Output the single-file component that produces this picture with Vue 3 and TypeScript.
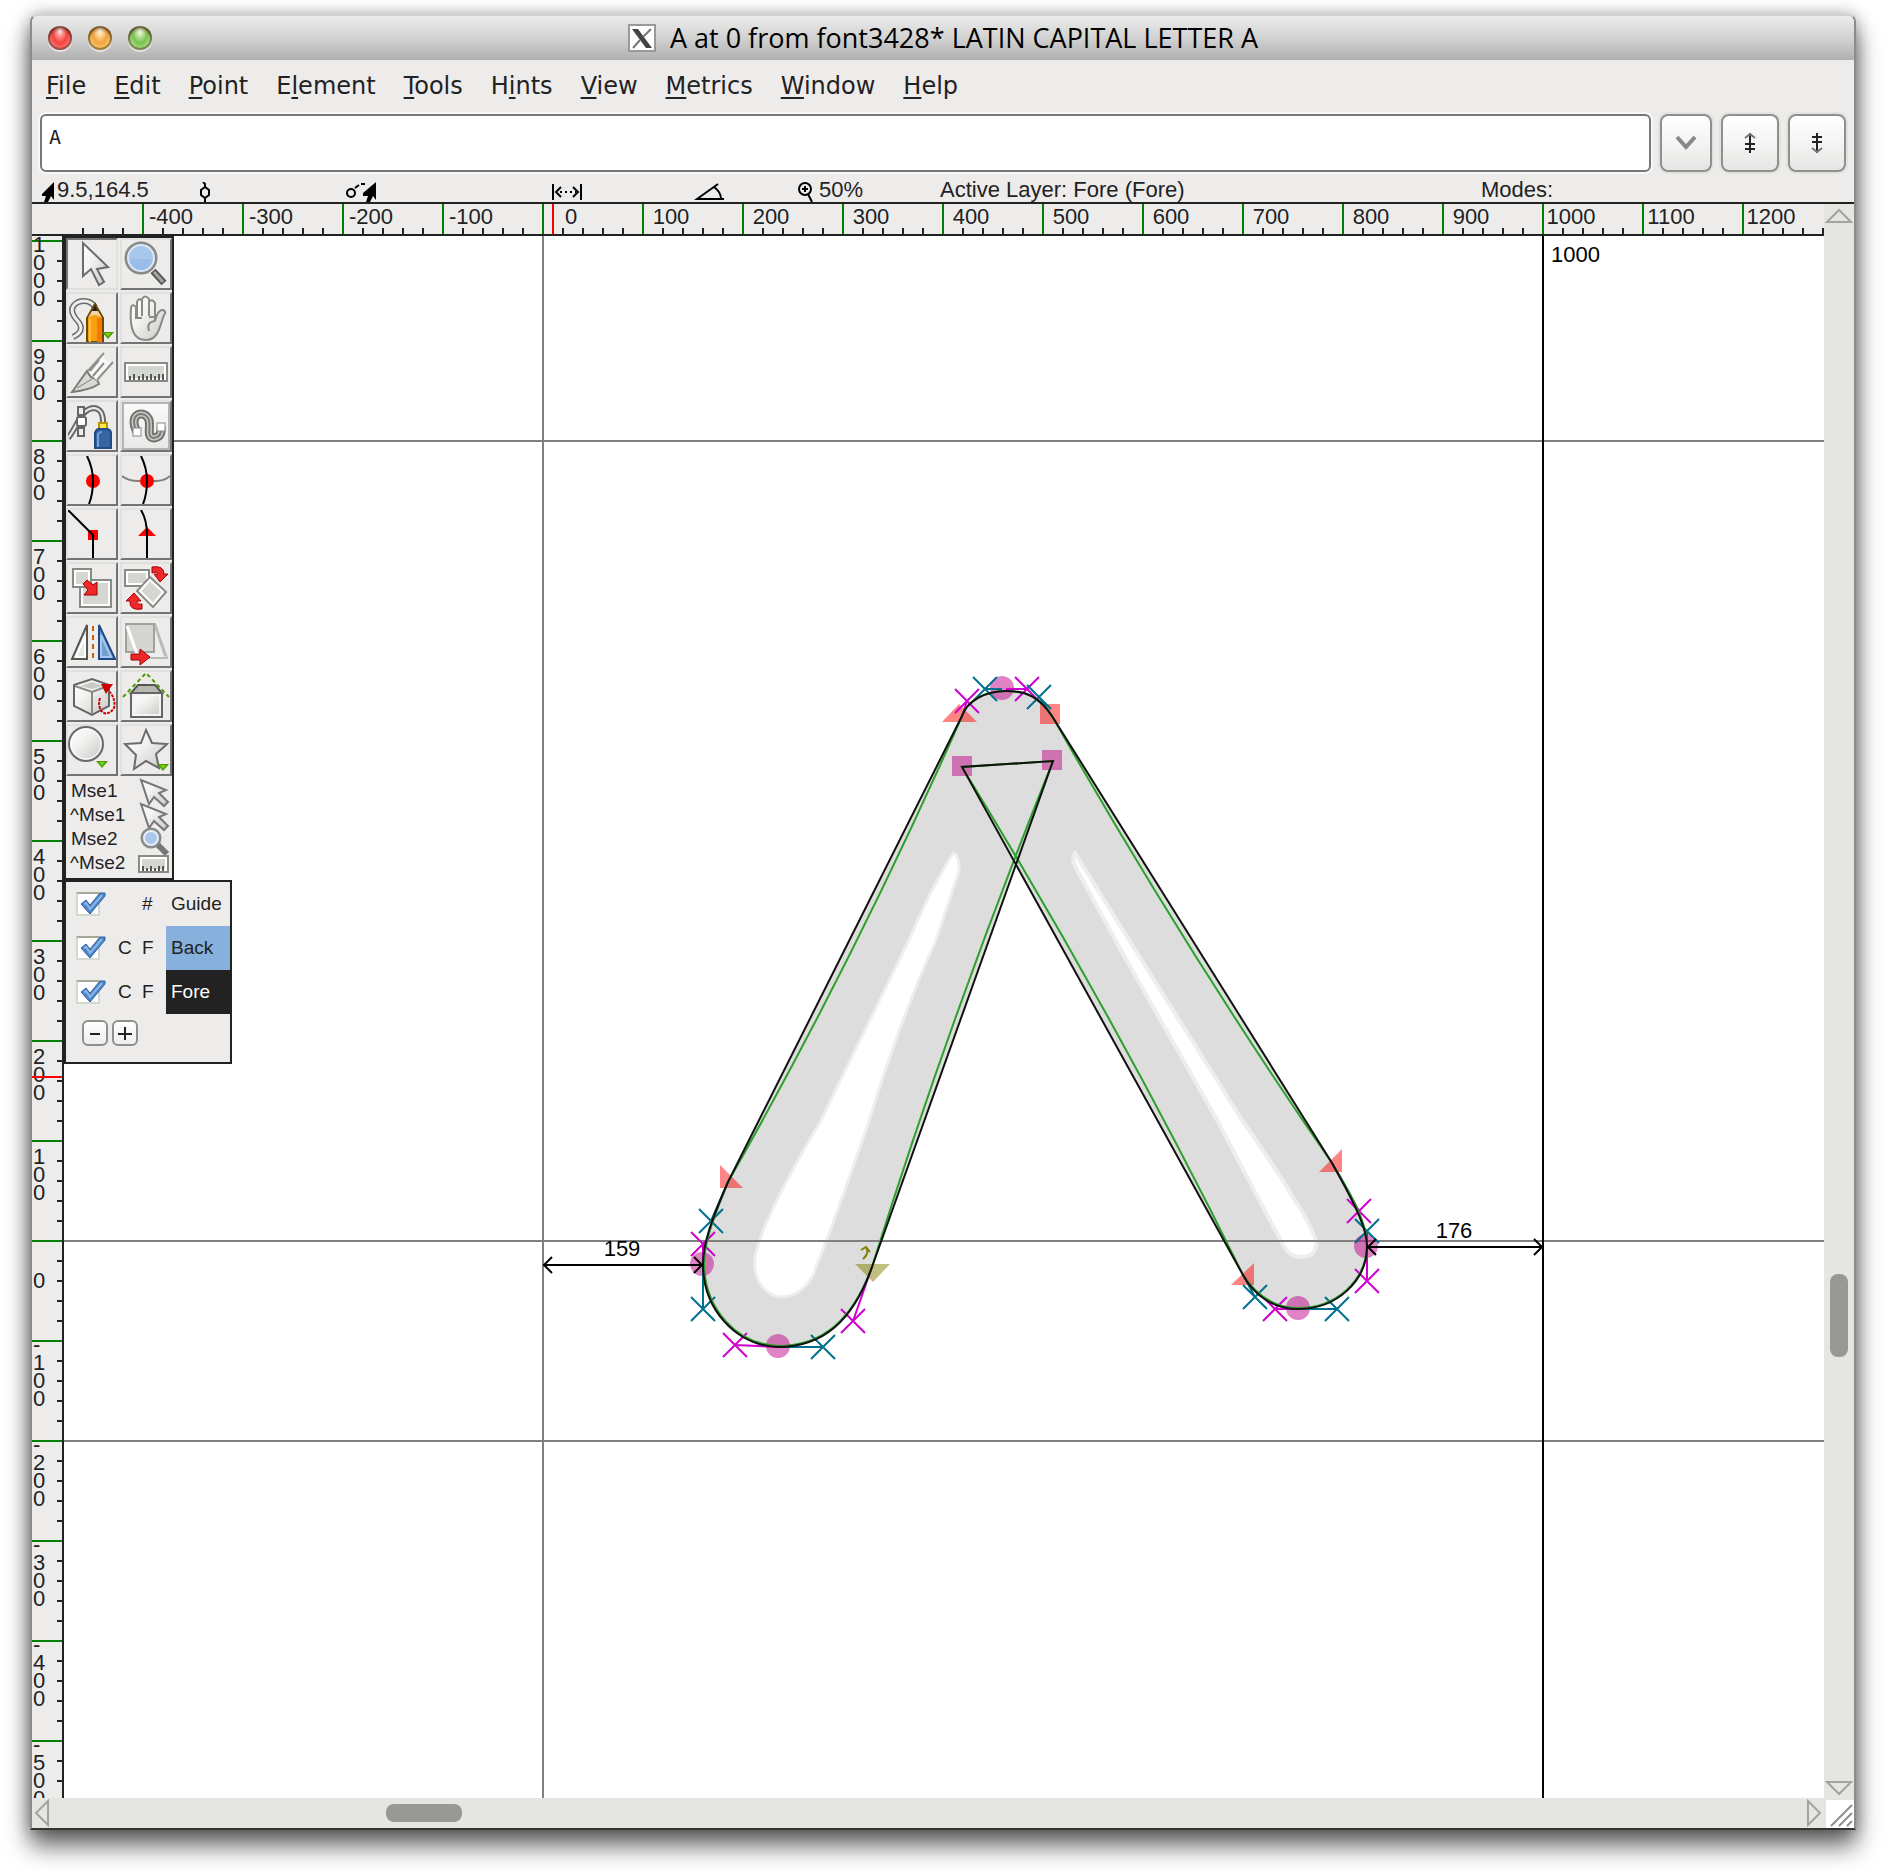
<script setup lang="ts">
import { computed, onBeforeUnmount, onMounted, ref } from 'vue'

interface Menu { pre: string; key: string; post: string }
const menus: Menu[] = [
  { pre: '', key: 'F', post: 'ile' },
  { pre: '', key: 'E', post: 'dit' },
  { pre: '', key: 'P', post: 'oint' },
  { pre: 'E', key: 'l', post: 'ement' },
  { pre: '', key: 'T', post: 'ools' },
  { pre: 'H', key: 'i', post: 'nts' },
  { pre: '', key: 'V', post: 'iew' },
  { pre: '', key: 'M', post: 'etrics' },
  { pre: '', key: 'W', post: 'indow' },
  { pre: '', key: 'H', post: 'elp' },
]

const glyphText = ref('A')

/* Rulers: one font unit per pixel. Zero sits at ZERO_X / ZERO_Y in ruler space. */
const ZERO_X = 511
const ZERO_Y = 1005
const viewWidth = ref(window.innerWidth)
const viewHeight = ref(window.innerHeight)
const measure = () => {
  viewWidth.value = window.innerWidth
  viewHeight.value = window.innerHeight
}
onMounted(() => window.addEventListener('resize', measure))
onBeforeUnmount(() => window.removeEventListener('resize', measure))

const range = (from: number, to: number, step: number): number[] => {
  const out: number[] = []
  for (let v = from; v <= to; v += step) out.push(v)
  return out
}
const right = computed(() => Math.max(viewWidth.value, 1640) - 94 - ZERO_X)
const bottom = computed(() => ZERO_Y - (Math.max(viewHeight.value, 1300) - 314))
const hMajor = computed(() => range(-400, right.value, 100).map(v => ({ v, x: ZERO_X + v })))
const hMinor = computed(() => range(-460, right.value, 20).filter(v => v % 100 !== 0).map(v => ZERO_X + v))
const vMajor = computed(() =>
  range(Math.ceil(bottom.value / 100) * 100, 1000, 100).map(v => ({ v, y: ZERO_Y - v, chars: String(v).split('') })),
)
const vMinor = computed(() =>
  range(Math.ceil(bottom.value / 20) * 20, 980, 20).filter(v => v % 100 !== 0).map(v => ZERO_Y - v),
)

/* Control points of the outline */
const nextHandles = [
  [962, 716, 967, 701], [1006, 689, 1027, 689], [1332, 1163, 1359, 1211],
  [1367, 1246, 1367, 1281], [1298, 1309, 1275, 1309], [872, 1267, 853, 1321],
  [778, 1347, 735, 1345], [703, 1264, 703, 1244],
]
const prevHandles = [
  [1002, 689, 985, 689], [1052, 716, 1039, 697], [1367, 1246, 1367, 1231],
  [1298, 1309, 1337, 1309], [1243, 1275, 1255, 1297], [778, 1347, 823, 1347],
  [703, 1264, 703, 1309], [728, 1182, 711, 1221],
]
const curvePoints = [[1002, 688], [1366, 1246], [1298, 1308], [778, 1346], [702, 1264]]

const black =
  'M962 716 C967 701 985 691 1006 691 C1027 691 1039 697 1052 716 L1332 1163 C1359 1211 1367 1231 1367 1246 ' +
  'C1367 1281 1337 1309 1298 1309 C1275 1309 1255 1297 1243 1275 L962 767 L1053 761 L872 1267 ' +
  'C853 1321 823 1347 778 1347 C735 1345 703 1309 703 1264 C703 1244 711 1221 728 1182 Z'
const green =
  'M962 716 C967 701 985 691 1006 691 C1027 691 1039 697 1052 716 Q1188 955 1332 1163 C1362 1211 1367 1231 1367 1246 ' +
  'C1366 1281 1336 1308 1298 1308 C1276 1308 1257 1296 1243 1275 Q1119 1023 962 767 L1053 761 Q949 1020 872 1267 ' +
  'C852 1321 822 1346 778 1346 C736 1344 705 1309 704 1264 C704 1244 712 1221 728 1182 Q857 955 962 716 Z'

interface Tool { name: string; art: string; pressed?: boolean; raised?: boolean }
const drop = (x: number, y: number) =>
  `<path d="M${x} ${y}h12l-6 7z" fill="#4e9a06"/><path d="M${x + 3} ${y + 1}h6l-3 4z" fill="#73d216"/>`
const tools: Tool[] = [
  { name: 'Pointer', pressed: true, art: '<path d="M15 3V36L23 29L31 45L36 42L29 29L40 27Z" fill="url(#metal)" stroke="#6b6b6b" stroke-width="2"/>' },
  { name: 'Magnify', art: '<path d="M31 31L42 43" stroke="#555753" stroke-width="7"/><path d="M32 32L41 42" stroke="#a5a59f" stroke-width="3"/><circle cx="19" cy="18" r="15" fill="#a9c7ea" stroke="#888a85" stroke-width="3"/><circle cx="19" cy="18" r="13" fill="none" stroke="#d8e6f6" stroke-width="2"/><path d="M8 19h22a11 11 0 0 1-22 0z" fill="#98bde8"/>' },
  { name: 'Freehand', art: '<path d="M5 43C18 37 12 29 8 25C-2 12 10 7 16 7Q23 7 27 13" fill="none" stroke="#6b6b6b" stroke-width="6"/><path d="M5 43C18 37 12 29 8 25C-2 12 10 7 16 7Q23 7 27 13" fill="none" stroke="#eee" stroke-width="3"/><path d="M19 48V24L27 10L35 24V48Z" fill="#f8a010" stroke="#6b4a00" stroke-width="2"/><path d="M20 24L27 12L34 24Q27 18 20 24Z" fill="#f3d3a8"/><path d="M24 17L27 11L30 17Z" fill="#222"/><path d="M29 24h5v24h-5z" fill="#f57900"/><path d="M21 25h2v23h-2z" fill="#fcc23a"/>' + drop(34, 38) },
  { name: 'Scroll by hand', art: '<path d="M15 43C9 38 8 27 9 14Q10 9 14 13V24L15 24V8Q17 3 20 7V22V5Q23 0 27 5V22V8Q30 4 33 9V27Q36 15 41 16Q45 18 42 21C38 31 37 45 25 46Q18 46 15 43Z" fill="url(#metal)" stroke="#888a85" stroke-width="2"/><path d="M14 24H20M27 23H32M33 27Q24 28 27 37" fill="none" stroke="#888a85" stroke-width="2"/>' },
  { name: 'Cut', art: '<path d="M4 44L19 23Q21 27 23 29Q30 31 31 36Q22 42 4 44Z" fill="#d9dad6" stroke="#7b7d79" stroke-width="2"/><path d="M9 40L24 31" stroke="#7b7d79" stroke-width="1"/><path d="M20 23L36 4Q34 14 45 14L29 33Z" fill="#f8f8f8"/><path d="M20 23L36 5M29 32L45 14M22 23L31 12M25 28L36 15" fill="none" stroke="#8f918c" stroke-width="2"/>' },
  { name: 'Measure', art: '<rect x="3" y="15" width="42" height="18" fill="#d3d7cf" stroke="#888a85" stroke-width="2"/><rect x="5" y="17" width="38" height="14" fill="none" stroke="#fff" stroke-width="2"/><path d="M8 32V28M12 32V26M17 32V28M21 32V26M25 32V28M29 32V26M33 32V28M37 32V26M41 32V26" stroke="#555753" stroke-width="2"/>' },
  { name: 'Pen', art: '<path d="M0 36C10 24 12 8 25 6Q36 6 35 23" fill="none" stroke="#6b6b6b" stroke-width="6"/><path d="M0 36C10 24 12 8 25 6Q36 6 35 23" fill="none" stroke="#eee" stroke-width="2"/><path d="M13 6V34" stroke="#777" stroke-width="6"/><path d="M13 6V34" stroke="#ddd" stroke-width="2"/><rect x="10" y="5" width="6" height="8" fill="#eee" stroke="#666" stroke-width="2"/><rect x="10" y="26" width="6" height="8" fill="#eee" stroke="#666" stroke-width="2"/><rect x="9" y="15" width="9" height="9" rx="2" fill="#fff" stroke="#666" stroke-width="2"/><path d="M31 21h8v6h-8z" fill="#fce94f" stroke="#b89600" stroke-width="2"/><path d="M27 46V31Q28 27 31 27H39Q43 28 43 31V46Z" fill="#3465a4" stroke="#204a87" stroke-width="2"/><path d="M30 45V32Q31 30 34 30" fill="none" stroke="#729fcf" stroke-width="2"/>' },
  { name: 'Spiro', raised: true, art: '<path d="M15 30C5 11 23 7 27 18C29 25 24 36 32 36Q40 35 39 25" fill="none" stroke="#70726e" stroke-width="9"/><path d="M15 30C5 11 23 7 27 18C29 25 24 36 32 36Q40 35 39 25" fill="none" stroke="#c9cbc6" stroke-width="5"/><path d="M15 30C5 11 23 7 27 18C29 25 24 36 32 36Q40 35 39 25" fill="none" stroke="#7b7d79" stroke-width="2"/><rect x="11" y="26" width="8" height="8" fill="#fff" stroke="#888" stroke-width="1"/><rect x="35" y="21" width="8" height="8" fill="#fff" stroke="#888" stroke-width="1"/>' },
  { name: 'Curve point', art: '<circle cx="25" cy="25" r="7" fill="#f00"/><path d="M19 0Q25 12 25 25T21 48" fill="none" stroke="#000" stroke-width="2"/>' },
  { name: 'HV curve point', art: '<path d="M0 20Q6 25 16 25H34Q43 25 48 20" fill="none" stroke="#808080" stroke-width="2"/><circle cx="25" cy="25" r="7" fill="#f00"/><path d="M19 0Q25 12 25 25T21 48" fill="none" stroke="#000" stroke-width="2"/>' },
  { name: 'Corner point', art: '<path d="M20 20h10v10h-10z" fill="#f00"/><path d="M0 0L25 25V48" fill="none" stroke="#000" stroke-width="2"/>' },
  { name: 'Tangent point', art: '<path d="M16 26L25 17L34 26Z" fill="#f00"/><path d="M19 0Q25 10 25 25V48" fill="none" stroke="#000" stroke-width="2"/>' },
  { name: 'Scale', art: '<rect x="12" y="16" width="31" height="27" fill="#d3d7cf" stroke="#888a85" stroke-width="2"/><rect x="14" y="18" width="27" height="23" fill="none" stroke="#fff" stroke-width="2"/><rect x="5" y="5" width="18" height="18" fill="#d3d7cf" stroke="#888a85" stroke-width="2"/><rect x="7" y="7" width="14" height="14" fill="none" stroke="#fff" stroke-width="2"/><path d="M15 20L19 16L25 21L29 18V31H16L20 26Z" fill="#ef2929" stroke="#a40000" stroke-width="1"/>' },
  { name: 'Rotate', art: '<rect x="3" y="6" width="24" height="16" fill="#d3d7cf" stroke="#888a85" stroke-width="2"/><rect x="5" y="8" width="20" height="12" fill="none" stroke="#fff" stroke-width="2"/><path d="M15 27L28 13L44 28L31 43Z" fill="#d3d7cf" stroke="#888a85" stroke-width="2"/><path d="M18 27L28 16L41 28L31 40Z" fill="none" stroke="#fff" stroke-width="2"/><path d="M30 3Q42 1 42 10H46L38 18L32 10H36Q36 7 30 9Z" fill="#ef2929" stroke="#a40000" stroke-width="1"/><path d="M20 45Q7 47 8 37H4L12 29L19 37H15Q15 41 20 40Z" fill="#ef2929" stroke="#a40000" stroke-width="1"/>' },
  { name: 'Flip', art: '<path d="M4 41L19 7V41Z" fill="#e6e8e3" stroke="#555753" stroke-width="2"/><path d="M8 39L17 18V39Z" fill="none" stroke="#fff" stroke-width="2"/><path d="M25 8V40" stroke="#ce5c00" stroke-width="2" stroke-dasharray="5 4"/><path d="M31 7V41H47Z" fill="#729fcf" stroke="#204a87" stroke-width="2"/><path d="M33 17V39H43Z" fill="none" stroke="#a9c7ea" stroke-width="2"/>' },
  { name: 'Skew', art: '<path d="M4 6H33L45 40H16Z" fill="#eee" stroke="#b9bbb6" stroke-width="2"/><path d="M4 6H32V34H4Z" fill="#d3d7cf" stroke="#a0a29d" stroke-width="2"/><path d="M5 8L15 36" stroke="#fff" stroke-width="3"/><path d="M33 8L43 38" stroke="#b9bbb6" stroke-width="2"/><path d="M9 36H18V31L28 39L18 47V42H9Z" fill="#ef2929" stroke="#a40000" stroke-width="1"/>' },
  { name: 'Rotate 3D', art: '<path d="M6 13L24 7L41 13V34L24 43L6 34Z" fill="url(#metal)" stroke="#666" stroke-width="2"/><path d="M7 14L24 20L40 14M24 20V42" fill="none" stroke="#888a85" stroke-width="2"/><path d="M12 14L24 10L35 14L24 17Z" fill="#c9cbc6"/><path d="M32 26C28 38 38 48 46 36Q48 28 42 20" fill="none" stroke="#c00" stroke-width="2" stroke-dasharray="3 1"/><path d="M33 12H45L38 22Z" fill="#c00"/>' },
  { name: 'Perspective', art: '<path d="M1 25L24 1L47 25" fill="none" stroke="#4e9a06" stroke-width="2" stroke-dasharray="4 3"/><path d="M9 21L16 13H33L40 21Z" fill="#b6b8b3" stroke="#555753" stroke-width="2"/><rect x="9" y="21" width="31" height="24" fill="url(#metal)" stroke="#666" stroke-width="2"/><rect x="11" y="23" width="27" height="20" fill="none" stroke="#f4f4f4" stroke-width="2"/>' },
  { name: 'Ellipse', art: '<circle cx="18" cy="18" r="17" fill="url(#metal)" stroke="#6b6b6b" stroke-width="2"/><circle cx="18" cy="18" r="15" fill="none" stroke="#fff" stroke-width="1"/>' + drop(28, 35) },
  { name: 'Star', art: '<path d="M24 4L30 17L45 18L34 28L37 42L24 35L12 43L14 29L3 18L19 17Z" fill="url(#metal)" stroke="#6b6b6b" stroke-width="2"/>' + drop(35, 38) },
]

const pointerArt = '<path d="M1 1L9 25L14 18L24 27L28 23L19 14L26 11Z" fill="url(#metal)" stroke="#777" stroke-width="2"/>'
const mouse = [
  { label: 'Mse1', indent: true, art: pointerArt },
  { label: '^Mse1', indent: false, art: pointerArt },
  { label: 'Mse2', indent: true, art: '<path d="M17 17L27 27" stroke="#777" stroke-width="6"/><circle cx="11" cy="11" r="9" fill="#a9c7ea" stroke="#888a85" stroke-width="3"/><circle cx="11" cy="11" r="7" fill="none" stroke="#e4eefa" stroke-width="2"/>' },
  { label: '^Mse2', indent: false, art: '<rect x="-1" y="5" width="29" height="16" fill="#d3d7cf" stroke="#888a85" stroke-width="2"/><rect x="1" y="7" width="25" height="12" fill="none" stroke="#fff" stroke-width="2"/><path d="M3 20V15M7 20V17M11 20V15M15 20V17M19 20V15M23 20V15" stroke="#555753" stroke-width="2"/>' },
]

const layers = ref([
  { name: 'Guide', kind: '', order: '#', visible: true, state: 'plain' },
  { name: 'Back', kind: 'C', order: 'F', visible: true, state: 'back' },
  { name: 'Fore', kind: 'C', order: 'F', visible: true, state: 'fore' },
])
</script>

<template>
  <div class="desktop">
    <svg class="defs" width="0" height="0" aria-hidden="true">
      <defs>
        <linearGradient id="metal" x1="0" y1="0" x2="1" y2="1">
          <stop offset="0" stop-color="#ffffff" />
          <stop offset="0.400" stop-color="#f2f2f1" />
          <stop offset="1" stop-color="#c6c8c3" />
        </linearGradient>
      </defs>
    </svg>

    <main class="window">
      <header class="titlebar">
        <div class="lights">
          <button class="light red" aria-label="Close"></button>
          <button class="light amber" aria-label="Minimize"></button>
          <button class="light lime" aria-label="Zoom"></button>
        </div>
        <h1 class="title">
          <svg width="28" height="28" viewBox="0 0 28 28" aria-hidden="true">
            <rect x="1" y="1" width="26" height="26" fill="#fff" stroke="#999" stroke-width="2" />
            <path d="M4 5H10L24 24H18Z" fill="#444" />
            <path d="M23 5L15 13M12 16L5 24" stroke="#777" stroke-width="2" />
          </svg>
          <span>A at 0 from font3428* LATIN CAPITAL LETTER A</span>
        </h1>
      </header>

      <nav class="menubar">
        <button v-for="m in menus" :key="m.pre + m.key + m.post">{{ m.pre }}<u>{{ m.key }}</u>{{ m.post }}</button>
      </nav>

      <div class="entry">
        <input v-model="glyphText" type="text" aria-label="Glyphs" />
        <button class="drop" aria-label="History">
          <svg width="22" height="16" viewBox="0 0 22 16"><path d="M2 2L11 12L20 2" fill="none" stroke="#888a85" stroke-width="4" /></svg>
        </button>
        <button aria-label="Previous word">
          <svg width="14" height="20" viewBox="0 0 14 20"><path d="M7 0V20M2 11H12M2 16H12" stroke="#222" stroke-width="2" /><path d="M2 5L7 1L12 5" fill="none" stroke="#777" stroke-width="2" /></svg>
        </button>
        <button aria-label="Next word">
          <svg width="14" height="20" viewBox="0 0 14 20"><path d="M7 0V20M2 4H12M2 9H12" stroke="#222" stroke-width="2" /><path d="M2 15L7 19L12 15" fill="none" stroke="#777" stroke-width="2" /></svg>
        </button>
      </div>

      <div class="status">
        <span class="cell">
          <svg width="12" height="20" viewBox="0 0 12 20"><path d="M12 0V18L9 14L6 20H2L4 14H0V12Z" fill="#000" /></svg>9.5,164.5
        </span>
        <span class="cell">
          <svg width="12" height="20" viewBox="0 0 12 20"><path d="M3 0L5 2V5L9 8V13L5 16L1 13V8L5 5M5 16V20" fill="none" stroke="#000" stroke-width="2" /></svg>
        </span>
        <span class="cell">
          <svg width="30" height="20" viewBox="0 0 30 20"><circle cx="5" cy="11" r="4" fill="none" stroke="#000" stroke-width="2" /><path d="M9 6L13 3M15 2H19" stroke="#000" stroke-width="2" /><path d="M30 0V18L27 14L24 20H20L22 14H17V11Z" fill="#000" /></svg>
        </span>
        <span class="cell">
          <svg width="30" height="20" viewBox="0 0 30 20"><path d="M1 2V18M29 2V18M9 5L4 10L9 15M21 5L26 10L21 15" fill="none" stroke="#000" stroke-width="2" /><path d="M8 10H24" stroke="#000" stroke-width="2" stroke-dasharray="2 3" /></svg>
        </span>
        <span class="cell">
          <svg width="30" height="20" viewBox="0 0 30 20"><path d="M24 2L3 17H30M20 5Q27 10 27 17" fill="none" stroke="#000" stroke-width="2" /></svg>
        </span>
        <span class="cell zoom">
          <svg width="16" height="20" viewBox="0 0 16 20"><circle cx="7" cy="7" r="6" fill="none" stroke="#000" stroke-width="2" /><path d="M4 7H10M7 4V10M10 12L14 20" stroke="#000" stroke-width="2" /></svg>50%
        </span>
        <span class="cell">Active Layer: Fore (Fore)</span>
        <span class="cell">Modes:</span>
      </div>

      <section class="editor">
        <svg class="h-ruler">
          <g stroke="#222" stroke-width="2">
            <line v-for="x in hMinor" :key="x" :x1="x" :x2="x" y1="24" y2="30" />
          </g>
          <g stroke="#008000" stroke-width="2">
            <line v-for="m in hMajor" :key="m.v" :x1="m.x" :x2="m.x" y1="0" y2="32" />
          </g>
          <text v-for="m in hMajor" :key="m.v" :x="m.x + 28" y="20" text-anchor="middle">{{ m.v }}</text>
          <line x1="521" x2="521" y1="0" y2="32" stroke="#f00" stroke-width="2" />
        </svg>

        <svg class="v-ruler">
          <g stroke="#222" stroke-width="2">
            <line v-for="y in vMinor" :key="y" :y1="y" :y2="y" x1="25" x2="30" />
          </g>
          <g stroke="#008000" stroke-width="2">
            <line v-for="m in vMajor" :key="m.v" :y1="m.y" :y2="m.y" x1="0" x2="32" />
          </g>
          <text v-for="m in vMajor" :key="m.v" :y="m.y + 59 - 12 * m.chars.length">
            <tspan v-for="(c, i) in m.chars" :key="i" x="1" :dy="i ? 18 : 0">{{ c }}</tspan>
          </text>
          <line y1="841" y2="841" x1="0" x2="32" stroke="#f00" stroke-width="2" />
        </svg>

        <div class="canvas">
          <svg class="drawing">
            <g transform="translate(-64 -236)">
              <path :d="black" fill="#ddd" />
              <path d="M953 853Q930 890 909 940L820 1122Q762 1220 755 1257C752 1285 770 1297 782 1297C800 1297 812 1280 815 1270Q835 1220 868 1124Q900 1020 936 940L959 871Q960 855 953 853Z" fill="#fff" stroke="#eee" stroke-width="3" />
              <path d="M1075 853Q1071 857 1075 866L1118 945L1217 1120L1283 1245Q1290 1257 1300 1257Q1317 1257 1316 1243Q1314 1230 1296 1202Q1275 1167 1242 1120L1129 940Z" fill="#fff" stroke="#eee" stroke-width="4" />

              <g stroke="#808080" stroke-width="2">
                <path d="M64 441H4000M64 1241H4000M64 1441H4000M543 236V4000" />
              </g>
              <path d="M1543 236V4000" stroke="#000" stroke-width="2" />

              <g fill="#c20789" fill-opacity="0.500">
                <circle v-for="p in curvePoints" :key="p[0]" :cx="p[0]" :cy="p[1]" r="12" />
                <rect x="952" y="756" width="20" height="20" />
                <rect x="1042" y="750" width="20" height="20" />
              </g>
              <g fill="#ff0a0a" fill-opacity="0.500">
                <path d="M942 722L959 704L977 722Z" />
                <path d="M1040 704h20v20h-20z" />
                <path d="M720 1165V1188H743Z" />
                <path d="M1342 1149V1172H1319Z" />
                <path d="M1254 1263V1285H1231Z" />
              </g>
              <path d="M855 1264H890L873 1282Z" fill="#808000" fill-opacity="0.500" />
              <path d="M861 1250L866 1247L870 1252M866 1247Q870 1253 863 1259" fill="none" stroke="#808000" stroke-width="2" />

              <g stroke="#d000d0" stroke-width="2">
                <path v-for="h in nextHandles" :key="h[2]" :d="`M${h[0]} ${h[1]}L${h[2]} ${h[3]}m-12 -12l24 24m0 -24l-24 24`" fill="none" />
              </g>
              <g stroke="#007090" stroke-width="2">
                <path v-for="h in prevHandles" :key="h[2]" :d="`M${h[0]} ${h[1]}L${h[2]} ${h[3]}m-12 -12l24 24m0 -24l-24 24`" fill="none" />
              </g>

              <path :d="green" fill="none" stroke="#2ca02c" stroke-width="2" />
              <path :d="black" fill="none" stroke="#111" stroke-width="2" />

              <g fill="none" stroke="#000" stroke-width="2">
                <path d="M543 1265H703M552 1257L544 1265L552 1273M694 1257L702 1265L694 1273" />
                <path d="M1367 1247H1543M1376 1239L1368 1247L1376 1255M1534 1239L1542 1247L1534 1255" />
              </g>
              <text x="622" y="1256" text-anchor="middle">159</text>
              <text x="1454" y="1238" text-anchor="middle">176</text>
              <text x="1551" y="262">1000</text>
            </g>
          </svg>

          <aside class="toolbox">
            <div class="tools">
              <button v-for="t in tools" :key="t.name" :aria-label="t.name" :class="{ pressed: t.pressed, raised: t.raised }">
                <svg width="48" height="48" viewBox="0 0 48 48" v-html="t.art"></svg>
              </button>
            </div>
            <ul class="mouse">
              <li v-for="m in mouse" :key="m.label" :class="{ indent: m.indent }">
                <span>{{ m.label }}</span>
                <svg width="30" height="24" viewBox="0 0 30 24" v-html="m.art"></svg>
              </li>
            </ul>
          </aside>

          <aside class="layers">
            <label v-for="l in layers" :key="l.name" class="layer">
              <span class="check">
                <input v-model="l.visible" type="checkbox" />
                <svg v-if="l.visible" width="28" height="24" viewBox="0 0 28 24"><path d="M3 12L8 8L12 13L22 1H27V4L12 22Z" fill="#4a86c8" stroke="#2a62a6" stroke-width="1" /><path d="M6 12L8 11L12 17L24 3" fill="none" stroke="#8db6e3" stroke-width="2" /></svg>
              </span>
              <span>{{ l.kind }}</span>
              <span>{{ l.order }}</span>
              <span class="name" :class="l.state">{{ l.name }}</span>
            </label>
            <div class="layer-actions">
              <button aria-label="Remove layer"><svg width="14" height="14" viewBox="0 0 14 14"><path d="M2 8H12" stroke="#222" stroke-width="2" /></svg></button>
              <button aria-label="Add layer"><svg width="14" height="14" viewBox="0 0 14 14"><path d="M0 8H14M7 1V14" stroke="#222" stroke-width="2" /></svg></button>
            </div>
          </aside>
        </div>

        <div class="v-scroll">
          <button aria-label="Scroll up"><svg width="28" height="16" viewBox="0 0 28 16"><path d="M2 14H26L14 2Z" fill="none" stroke="#a3a39f" stroke-width="2" /></svg></button>
          <span class="v-before"></span><span class="thumb"></span><span class="v-after"></span>
          <button aria-label="Scroll down"><svg width="28" height="16" viewBox="0 0 28 16"><path d="M2 2H26L14 14Z" fill="none" stroke="#a3a39f" stroke-width="2" /></svg></button>
        </div>
        <div class="h-scroll">
          <button aria-label="Scroll left"><svg width="16" height="28" viewBox="0 0 16 28"><path d="M14 2V26L2 14Z" fill="none" stroke="#a3a39f" stroke-width="2" /></svg></button>
          <span class="h-before"></span><span class="thumb"></span><span class="h-after"></span>
          <button aria-label="Scroll right"><svg width="16" height="28" viewBox="0 0 16 28"><path d="M2 2V26L14 14Z" fill="none" stroke="#a3a39f" stroke-width="2" /></svg></button>
        </div>
        <div class="grip">
          <svg width="28" height="28" viewBox="0 0 28 28"><path d="M5 26L26 5M13 26L26 13M21 26L26 21" stroke="#8f8f8b" stroke-width="2" /></svg>
        </div>
      </section>
    </main>
  </div>
</template>

<style>
body {
  margin: 0;
  background: #fff;
}
</style>

<style scoped>
.desktop {
  box-sizing: border-box;
  height: 100vh;
  min-height: 1300px;
  min-width: 1640px;
  padding: 14px 30px 46px;
  display: flex;
  overflow: hidden;
  font-family: "Liberation Sans", Arial, sans-serif;
  font-size: 22px;
  color: #222;
}
.defs {
  position: absolute;
}
button {
  margin: 0;
  padding: 0;
  border: 0;
  background: none;
  color: inherit;
  font: inherit;
}
svg {
  display: block;
}
.window {
  flex: 1;
  min-width: 0;
  display: flex;
  flex-direction: column;
  background: #edeceb;
  border: 2px solid #8c8c8c;
  border-top-color: #d2d2d2;
  border-bottom-color: #333;
  border-radius: 8px 8px 0 0;
  box-shadow: 0 16px 24px rgba(0, 0, 0, 0.6), 0 0 16px rgba(0, 0, 0, 0.3);
}
.titlebar {
  flex: none;
  height: 44px;
  display: grid;
  grid-template-columns: 1fr auto 1fr;
  align-items: center;
  padding: 0 16px;
  border-radius: 6px 6px 0 0;
  background: linear-gradient(#ececec, #d2d2d2 50%, #b0b0b0);
}
.lights {
  display: flex;
  gap: 16px;
}
.light {
  width: 24px;
  height: 24px;
  border-radius: 50%;
  box-shadow: inset 0 0 0 2px rgba(60, 40, 20, 0.45), inset 0 4px 3px rgba(70, 30, 0, 0.35), 0 2px 1px rgba(255, 255, 255, 0.6);
}
.red {
  background: radial-gradient(ellipse at 50% 20%, #fff 0, #ff9a98 18%, #f4403d 45%, #fba5a5 90%);
}
.amber {
  background: radial-gradient(ellipse at 50% 20%, #fff 0, #ffd79a 18%, #f2a33c 45%, #fdeb95 90%);
}
.lime {
  background: radial-gradient(ellipse at 50% 20%, #fff 0, #c4eaa9 18%, #79c152 45%, #d6f4ae 90%);
}
.title {
  margin: 0;
  display: flex;
  align-items: center;
  gap: 14px;
  font: 400 27px/36px "Open Sans", "Noto Sans", sans-serif;
  color: #000;
  white-space: nowrap;
}
.menubar {
  flex: none;
  height: 54px;
  display: flex;
  align-items: center;
  gap: 28px;
  padding: 0 14px 2px;
  box-sizing: border-box;
  font: 24px/30px "DejaVu Sans", sans-serif;
}
.menubar u {
  text-decoration-thickness: 2px;
  text-underline-offset: 3px;
}
.entry {
  flex: none;
  height: 58px;
  display: flex;
  gap: 9px;
  padding: 0 8px;
}
.entry input {
  flex: 1;
  min-width: 0;
  box-sizing: border-box;
  margin: 0;
  padding: 0 7px 12px;
  border: 2px solid #777;
  border-radius: 6px;
  outline: 0;
  background: #fff;
  box-shadow: 0 0 0 2px #f7f7f6;
  color: #222;
  font: 20px "DejaVu Sans Mono", monospace;
}
.entry button {
  box-sizing: border-box;
  width: 58px;
  display: flex;
  align-items: center;
  justify-content: center;
  border: 2px solid #8f8f8c;
  border-radius: 8px;
  background: linear-gradient(#fff, #f4f4f4 50%, #e6e6e5);
  box-shadow: 0 0 0 2px #e2e1e0;
}
.entry .drop {
  width: 52px;
}
.status {
  flex: none;
  height: 30px;
  display: grid;
  grid-template-columns: 158px 146px 206px 142px 104px 142px 541px 1fr;
  padding-left: 10px;
  border-bottom: 2px solid #222;
  line-height: 36px;
  white-space: nowrap;
}
.cell {
  height: 30px;
  display: flex;
  gap: 3px;
}
.cell.zoom {
  gap: 5px;
}
.cell svg {
  flex: none;
  margin-top: 10px;
}
.editor {
  flex: 1;
  min-height: 0;
  display: grid;
  grid-template-columns: 32px minmax(0, 1fr) 30px;
  grid-template-rows: 32px minmax(0, 1fr) 30px;
}
.h-ruler {
  grid-area: 1 / 1 / 2 / 3;
  box-sizing: border-box;
  width: 100%;
  height: 32px;
  border-bottom: 2px solid #222;
  overflow: hidden;
  fill: #222;
}
.v-ruler {
  grid-area: 2 / 1 / 3 / 2;
  box-sizing: border-box;
  width: 32px;
  height: 100%;
  border-right: 2px solid #222;
  overflow: hidden;
  fill: #222;
}
.canvas {
  grid-area: 2 / 2 / 3 / 3;
  position: relative;
  overflow: hidden;
  background: #fff;
}
.drawing {
  width: 100%;
  height: 100%;
  fill: #000;
}
.toolbox {
  position: absolute;
  left: 0;
  top: 0;
  box-sizing: border-box;
  width: 110px;
  border: 2px solid #222;
  background: #edeceb;
}
.tools {
  display: grid;
  grid-template-columns: 52px 52px;
  gap: 2px;
}
.tools button {
  box-sizing: border-box;
  width: 52px;
  height: 52px;
  border: 2px solid;
  border-color: #e0e0df #737373 #737373 #e0e0df;
}
.tools .pressed {
  border-color: #737373 #e0e0df #e0e0df #737373;
}
.tools .raised svg {
  background: linear-gradient(#fafafa, #e8e8e7);
  box-shadow: inset 0 0 0 2px #b4b4b2;
}
.mouse {
  list-style: none;
  margin: 0;
  padding: 3px 2px 3px 4px;
  font-size: 19px;
  line-height: 24px;
}
.mouse li {
  height: 24px;
  display: flex;
  justify-content: space-between;
}
.mouse .indent span {
  padding-left: 1px;
}
.mouse svg {
  flex: none;
  overflow: visible;
}
.layers {
  position: absolute;
  left: 0;
  top: 644px;
  box-sizing: border-box;
  width: 168px;
  border: 2px solid #222;
  background: #edeceb;
  font-size: 19px;
}
.layer {
  display: grid;
  grid-template-columns: 52px 24px 24px 64px;
  line-height: 44px;
}
.check {
  position: relative;
  padding: 10px 0 0 10px;
  line-height: 0;
}
.check input {
  appearance: none;
  box-sizing: border-box;
  width: 24px;
  height: 24px;
  margin: 0;
  border: 2px solid #d3d7cf;
  border-top-color: #a3a898;
  background: #fff;
}
.check svg {
  position: absolute;
  left: 12px;
  top: 10px;
}
.name {
  padding-left: 5px;
}
.name.back {
  background: #87b1dc;
}
.name.fore {
  background: #222;
  color: #fff;
}
.layer-actions {
  display: flex;
  gap: 4px;
  padding: 6px 16px 16px;
}
.layer-actions button {
  box-sizing: border-box;
  width: 26px;
  height: 26px;
  display: flex;
  align-items: center;
  justify-content: center;
  border: 2px solid #8f8f8c;
  border-radius: 6px;
  background: linear-gradient(#fff, #eee);
}
.v-scroll {
  grid-area: 1 / 3 / 3 / 4;
  display: flex;
  flex-direction: column;
  align-items: center;
  padding: 4px 0 2px;
  background: #e5e6e1;
}
.h-scroll {
  grid-area: 3 / 1 / 4 / 3;
  display: flex;
  align-items: center;
  padding: 0 2px;
  background: #e5e6e1;
}
.thumb {
  border-radius: 8px;
  background: #989894;
}
.v-scroll .thumb {
  width: 18px;
  flex: 83 0 0;
}
.h-scroll .thumb {
  height: 18px;
  flex: 76 0 0;
}
.v-before {
  flex: 1049 0 0;
}
.v-after {
  flex: 422 0 0;
}
.h-before {
  flex: 335 0 0;
}
.h-after {
  flex: 1341 0 0;
}
.grip {
  grid-area: 3 / 3 / 4 / 4;
  box-sizing: border-box;
  border: solid #e3e3e1;
  border-width: 2px 0 0 2px;
  background: #fff;
}
</style>
